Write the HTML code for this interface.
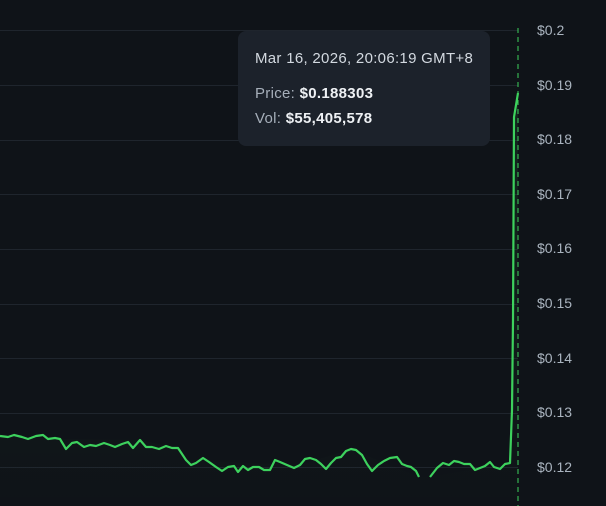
<!DOCTYPE html>
<html><head><meta charset="utf-8"><style>
html,body{margin:0;padding:0;background:#0f1318;width:606px;height:506px;overflow:hidden;font-family:"Liberation Sans",sans-serif}
.lbl{position:absolute;left:537px;color:#aab4bf;font-size:14px;line-height:16px}
.tip{position:absolute;left:238px;top:31px;width:252px;height:115px;background:#1c222b;border-radius:8px;color:#d3d9e0;font-size:15px;letter-spacing:0.3px}
.tip div{position:absolute;left:17px;white-space:nowrap}
.tip .k{color:#a6afba}
.tip b{color:#eef1f4}
</style></head><body>
<svg width="606" height="506" style="position:absolute;left:0;top:0">
<defs><linearGradient id="g" x1="0" y1="0" x2="0" y2="1"><stop offset="0" stop-color="#3dd15d" stop-opacity="0.10"/><stop offset="1" stop-color="#3dd15d" stop-opacity="0"/></linearGradient></defs>
<g stroke="#1f252d" stroke-width="1">
<line x1="0" y1="30.5" x2="518" y2="30.5"/><line x1="0" y1="85.5" x2="518" y2="85.5"/><line x1="0" y1="140.5" x2="518" y2="140.5"/><line x1="0" y1="194.5" x2="518" y2="194.5"/><line x1="0" y1="249.5" x2="518" y2="249.5"/><line x1="0" y1="304.5" x2="518" y2="304.5"/><line x1="0" y1="358.5" x2="518" y2="358.5"/><line x1="0" y1="413.5" x2="518" y2="413.5"/><line x1="0" y1="467.5" x2="518" y2="467.5"/>
</g>
<path fill="url(#g)" d="M0,436 L60,439 L140,440 L178,448 L186,460 L300,465 L351,449 L419,477 L430,477 L510,463 L512,410 L513,320 L514,117 L518,93 L518,506 L0,506Z"/>
<polyline fill="none" stroke="#3dd15d" stroke-width="2.2" stroke-linejoin="round" points="0,436 8,437 14,435 22,437 28,439 36,436 43,435 48,439 55,438 60,439 66,449 72,443 77,442 84,447 90,445 96,446 104,443 110,445 115,447 122,444 128,442 133,448 140,440 146,447 152,447 159,449 166,446 172,448 178,448 186,460 191,465 196,463 203,458 209,462 216,467 222,471 228,467 234,466 238,472 243,466 248,470 253,467 259,467 264,470 270,470 275,460 280,462 287,465 294,468 300,465 305,459 310,458 316,460 321,464 326,469 331,463 336,458 341,457 346,451 351,449 356,450 362,455 367,464 372,471 378,465 384,461 390,458 397,457 402,464 407,466 411,467 416,471 419,477"/>
<polyline fill="none" stroke="#3dd15d" stroke-width="2.2" stroke-linejoin="round" points="430,477 437,468 443,463 449,465 454,461 459,462 464,464 470,464 475,470 480,468 485,466 490,462 494,467 500,469 505,464 510,463 512,410 513,320 514,117 518,93"/>
<line x1="518" y1="28" x2="518" y2="506" stroke="#3dd15d" stroke-width="1" stroke-dasharray="5,4"/>
</svg>
<div class="lbl" style="top:22px">$0.2</div>
<div class="lbl" style="top:77px">$0.19</div>
<div class="lbl" style="top:131px">$0.18</div>
<div class="lbl" style="top:186px">$0.17</div>
<div class="lbl" style="top:240px">$0.16</div>
<div class="lbl" style="top:295px">$0.15</div>
<div class="lbl" style="top:350px">$0.14</div>
<div class="lbl" style="top:404px">$0.13</div>
<div class="lbl" style="top:459px">$0.12</div>
<div class="tip">
<div style="top:19px">Mar 16, 2026, 20:06:19 GMT+8</div>
<div style="top:54px"><span class="k">Price: </span><b>$0.188303</b></div>
<div style="top:79px"><span class="k">Vol: </span><b>$55,405,578</b></div>
</div>
</body></html>
